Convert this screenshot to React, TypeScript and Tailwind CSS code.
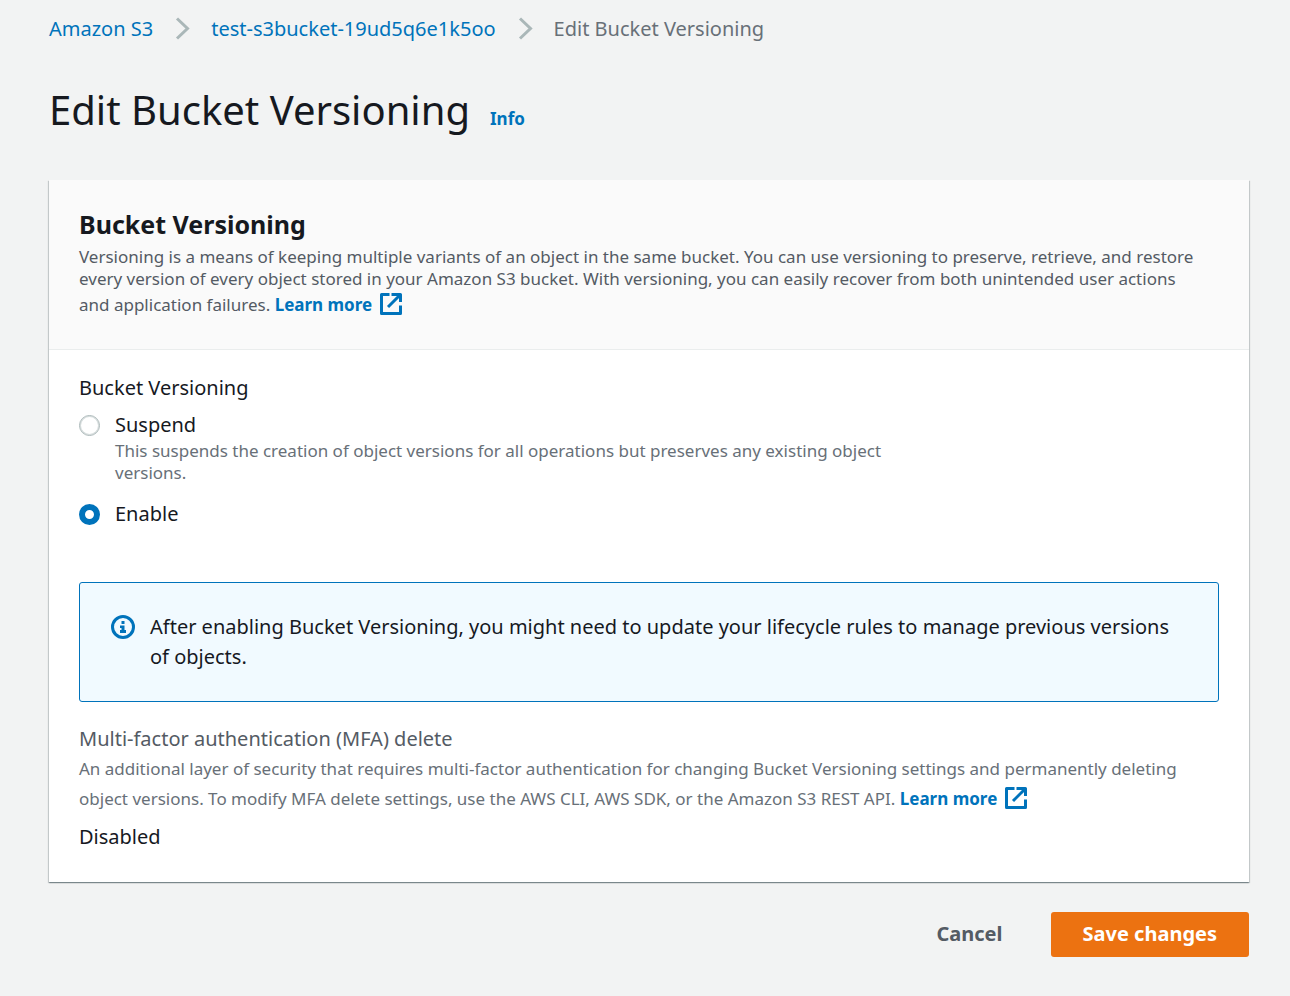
import { useState, type ReactNode } from 'react'

function ChevronIcon() {
  return (
    <svg viewBox="0 0 16 24" className="h-6 w-4 shrink-0" fill="none" stroke="#aab7b8" strokeWidth="3" aria-hidden="true">
      <path d="M2 1.500l10.500 10L2 21.500" />
    </svg>
  )
}

function ExternalIcon() {
  return (
    <svg viewBox="0 0 22 22" className="mb-1 ml-2 inline-block size-[22px] align-middle" fill="none" stroke="currentColor" strokeWidth="3" aria-hidden="true">
      <path d="M9.500 1.500h-8v19h19v-8" strokeLinejoin="round" />
      <path d="M11.500 1.500h9v7.500" strokeLinejoin="round" />
      <path d="M20 2L8 14" />
    </svg>
  )
}

function InfoIcon() {
  return (
    <svg viewBox="0 0 24 24" className="mt-[3px] size-6 shrink-0 text-[#0073bb]" fill="none" aria-hidden="true">
      <circle cx="12" cy="12" r="10.500" stroke="currentColor" strokeWidth="3" />
      <path fill="currentColor" d="M10.500 6h3v3h-3zM9 10.500h4.500V15H15v3H9v-3h1.500v-2H9z" />
    </svg>
  )
}

function LearnMore() {
  return (
    <a href="#learn-more" className="leading-[30px] font-bold text-[#0073bb]">
      Learn more
      <ExternalIcon />
    </a>
  )
}

type RadioProps = {
  value: string
  label: string
  checked: boolean
  onSelect: (value: string) => void
  children?: ReactNode
}

function RadioOption({ value, label, checked, onSelect, children }: RadioProps) {
  return (
    <div className="flex gap-[15px]">
      <input
        type="radio"
        id={value}
        name="versioning"
        value={value}
        checked={checked}
        onChange={() => onSelect(value)}
        className="mt-[5px] size-[21px] shrink-0 appearance-none rounded-full border border-[#aab7b8] bg-white shadow-[inset_0_0_0_1px_rgba(170,183,184,0.5)] checked:border-[6px] checked:border-[#0073bb] checked:shadow-none"
      />
      <div>
        <label htmlFor={value} className="block">{label}</label>
        {children}
      </div>
    </div>
  )
}

export default function App() {
  const [versioning, setVersioning] = useState('enable')

  return (
    <div className="min-h-screen bg-[#f2f3f3] pt-[14px] pr-[41px] pb-8 pl-[49px] font-['Noto_Sans',sans-serif] text-[20px] leading-[30px] text-[#16191f]">
      <nav aria-label="Breadcrumb">
        <ol className="flex items-center">
          <li><a href="#s3" className="text-[#0073bb]">Amazon S3</a></li>
          <li className="flex items-center gap-5 pl-[22px]">
            <ChevronIcon />
            <a href="#bucket" className="text-[#0073bb]">test-s3bucket-19ud5q6e1k5oo</a>
          </li>
          <li className="flex items-center gap-5 pl-[22px] text-[#687078]">
            <ChevronIcon />
            Edit Bucket Versioning
          </li>
        </ol>
      </nav>

      <div className="mt-[39px] flex items-baseline gap-5">
        <h1 className="text-[40px] leading-[54px]">Edit Bucket Versioning</h1>
        <a href="#info" className="text-[17px] font-bold text-[#0073bb]">Info</a>
      </div>

      <section className="mt-[43px] bg-white shadow-[0_1px_1px_0_rgba(0,28,36,0.3),1px_1px_1px_0_rgba(0,28,36,0.15),-1px_1px_1px_0_rgba(0,28,36,0.15)]">
        <header className="border-b border-[#eaeded] bg-[#fafafa] px-[30px] pt-[26px] pb-[29px]">
          <h2 className="text-[25px] leading-[36px] font-bold">Bucket Versioning</h2>
          <p className="mt-1 pr-3 text-[17px] leading-[22px] text-[#545b64]">
            Versioning is a means of keeping multiple variants of an object in the same bucket. You can use versioning to preserve, retrieve, and restore every version of every object stored in your Amazon S3 bucket. With versioning, you can easily recover from both unintended user actions and application failures. <LearnMore />
          </p>
        </header>

        <div className="px-[30px] pt-[23px] pb-[30px]">
          <fieldset>
            <legend>Bucket Versioning</legend>
            <div className="mt-[7px] flex flex-col gap-[15px]">
              <RadioOption value="suspend" label="Suspend" checked={versioning === 'suspend'} onSelect={setVersioning}>
                <p className="max-w-[800px] text-[17px] leading-[22px] text-[#687078]">
                  This suspends the creation of object versions for all operations but preserves any existing object versions.
                </p>
              </RadioOption>
              <RadioOption value="enable" label="Enable" checked={versioning === 'enable'} onSelect={setVersioning} />
            </div>
          </fieldset>

          <div className="mt-[53px] flex gap-[15px] rounded-[3px] border border-[#0073bb] bg-[#f1faff] px-[31px] py-[29px]">
            <InfoIcon />
            <p>After enabling Bucket Versioning, you might need to update your lifecycle rules to manage previous versions of objects.</p>
          </div>

          <div className="mt-[22px]">
            <h3 className="text-[#545b64]">Multi-factor authentication (MFA) delete</h3>
            <p className="text-[17px] text-[#687078]">
              An additional layer of security that requires multi-factor authentication for changing Bucket Versioning settings and permanently deleting object versions. To modify MFA delete settings, use the AWS CLI, AWS SDK, or the Amazon S3 REST API. <LearnMore />
            </p>
            <p className="mt-2">Disabled</p>
          </div>
        </div>
      </section>

      <div className="mt-[30px] flex justify-end gap-4 font-bold">
        <button type="button" className="h-[45px] px-8 pb-px text-[#545b64]">Cancel</button>
        <button type="button" className="h-[45px] rounded-[3px] bg-[#ec7211] px-8 pb-px text-white">Save changes</button>
      </div>
    </div>
  )
}
